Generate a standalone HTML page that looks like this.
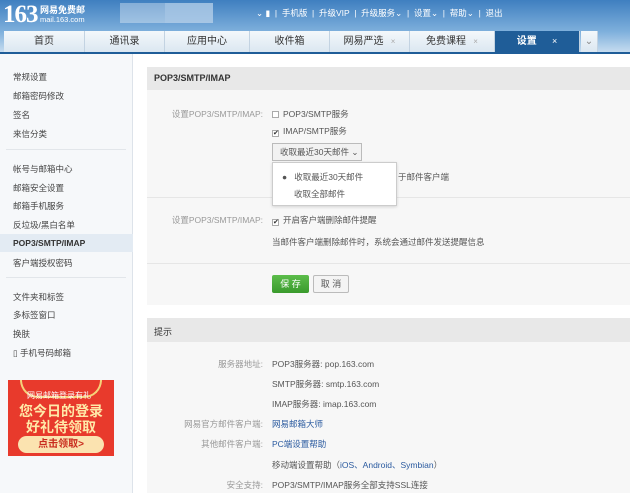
<!DOCTYPE html><html><head><meta charset="utf-8"><style>
*{margin:0;padding:0;box-sizing:border-box}
body{width:630px;height:493px;overflow:hidden;font-family:"Liberation Sans","Noto Sans CJK SC",sans-serif;font-size:9px;color:#444;background:#fff;position:relative}
.a{position:absolute;white-space:nowrap}
#hd{position:absolute;left:0;top:0;width:630px;height:53px;background:linear-gradient(#3f7fc0,#7fb0dc 60%,#c9def0)}
.tab{position:absolute;top:31px;height:21px;background:linear-gradient(#f4f8fb,#dbe7f1);border-right:1px solid #c3d3e2;font-size:10px;color:#333;line-height:21px;text-align:center}
.nav{color:#fff;font-size:8.5px;top:7px}
.sb{left:13px;font-size:8.5px;color:#444}
.lab{right:367px;color:#999;font-size:8.5px;text-align:right}
.v{left:272px;font-size:8.5px;color:#555}
.cb{display:inline-block;width:7px;height:7px;border:1px solid #aaa;background:#fff;vertical-align:-1px;margin-right:4px;font-size:7px;line-height:5px;color:#333;text-align:center}
</style></head><body>
<div id="hd"></div>
<div class="a" style="left:3px;top:1px;font-size:25px;font-weight:bold;color:#fff;font-family:'Liberation Serif',serif;letter-spacing:-1px">163</div>
<div class="a" style="left:40px;top:3px;font-size:9px;color:#fff;font-weight:bold">网易免费邮</div>
<div class="a" style="left:40px;top:15px;font-size:7.5px;color:#fff">mail.163.com</div>
<div class="a" style="left:120px;top:3px;width:93px;height:20px;background:rgba(255,255,255,.35)"></div>
<div class="a" style="left:165px;top:3px;width:48px;height:20px;background:rgba(170,200,230,.6)"></div>
<div class="a nav" style="left:256px">⌄ ▮ &nbsp;|&nbsp; 手机版 &nbsp;|&nbsp; 升级VIP &nbsp;|&nbsp; 升级服务⌄ &nbsp;|&nbsp; 设置⌄ &nbsp;|&nbsp; 帮助⌄ &nbsp;|&nbsp; 退出</div>
<div class="tab" style="left:4px;width:81px">首页</div>
<div class="tab" style="left:85px;width:80px">通讯录</div>
<div class="tab" style="left:165px;width:85px">应用中心</div>
<div class="tab" style="left:250px;width:80px">收件箱</div>
<div class="tab" style="left:330px;width:80px">网易严选 <span style="color:#aaa;font-size:8px">&nbsp;&nbsp;×</span></div>
<div class="tab" style="left:410px;width:85px">免费课程 <span style="color:#aaa;font-size:8px">&nbsp;&nbsp;×</span></div>
<div class="tab" style="left:495px;width:85px;background:#1f5d98;color:#fff;font-weight:bold">设置 <span style="font-weight:normal;font-size:9px">&nbsp;&nbsp;&nbsp;&nbsp;&nbsp;×</span></div>
<div class="tab" style="left:581px;width:17px;color:#888">⌄</div>
<div class="a" style="left:0;top:52px;width:630px;height:2px;background:#1f5d98"></div>
<div class="a" style="left:0;top:54px;width:133px;height:439px;background:#f6f8fa;border-right:1px solid #dde3ea"></div>
<div class="a sb" style="top:71px">常规设置</div>
<div class="a sb" style="top:90px">邮箱密码修改</div>
<div class="a sb" style="top:109px">签名</div>
<div class="a sb" style="top:128px">来信分类</div>
<div class="a" style="left:6px;top:149px;width:120px;height:1px;background:#e2e6ea"></div>
<div class="a sb" style="top:163px">帐号与邮箱中心</div>
<div class="a sb" style="top:182px">邮箱安全设置</div>
<div class="a sb" style="top:200px">邮箱手机服务</div>
<div class="a sb" style="top:219px">反垃圾/黑白名单</div>
<div class="a" style="left:0;top:234px;width:133px;height:18px;background:#e3ebf3"></div>
<div class="a sb" style="top:238px;font-weight:bold;color:#333">POP3/SMTP/IMAP</div>
<div class="a sb" style="top:257px">客户端授权密码</div>
<div class="a" style="left:6px;top:277px;width:120px;height:1px;background:#e2e6ea"></div>
<div class="a sb" style="top:291px">文件夹和标签</div>
<div class="a sb" style="top:309px">多标签窗口</div>
<div class="a sb" style="top:328px">换肤</div>
<div class="a sb" style="top:347px">▯ 手机号码邮箱</div>
<div class="a" style="left:8px;top:380px;width:106px;height:76px;background:#e83a2c"></div>
<div class="a" style="left:20px;top:380px;width:82px;height:18px;border:2px solid #f5d27a;border-top:none;border-radius:0 0 20px 20px"></div>
<div class="a" style="left:27px;top:390px;font-size:8px;color:#fff">网易邮箱登录有礼</div>
<div class="a" style="left:19px;top:401px;font-size:14px;color:#ffe9a8;font-weight:bold">您今日的登录</div>
<div class="a" style="left:26px;top:417px;font-size:14px;color:#ffe9a8;font-weight:bold">好礼待领取</div>
<div class="a" style="left:18px;top:436px;width:86px;height:17px;border-radius:9px;background:#fbe3b0;color:#c92b1e;font-size:10px;font-weight:bold;text-align:center;line-height:17px">点击领取&gt;</div>
<div class="a" style="left:147px;top:67px;width:483px;height:238px;background:#f7f7f7"></div>
<div class="a" style="left:147px;top:67px;width:483px;height:23px;background:#e8e8e8"></div>
<div class="a" style="left:154px;top:73px;font-weight:bold;font-size:9px;color:#333">POP3/SMTP/IMAP</div>
<div class="a lab" style="top:108px">设置POP3/SMTP/IMAP:</div>
<div class="a v" style="top:108px"><span class="cb"></span>POP3/SMTP服务</div>
<div class="a v" style="top:125px"><span class="cb">✔</span>IMAP/SMTP服务</div>
<div class="a" style="left:147px;top:197px;width:483px;height:1px;background:#e6e6e6"></div>
<div class="a v" style="left:398px;top:171px">于邮件客户端</div>
<div class="a" style="left:272px;top:143px;width:90px;height:18px;border:1px solid #bbb;background:#f2f2f2;font-size:8.5px;line-height:16px;padding-left:7px;color:#555">收取最近30天邮件 ⌄</div>
<div class="a" style="left:272px;top:162px;width:125px;height:44px;background:#fff;border:1px solid #ccc;box-shadow:0 1px 3px rgba(0,0,0,.15)"></div>
<div class="a v" style="left:282px;top:171px">●&nbsp;&nbsp;&nbsp;收取最近30天邮件</div>
<div class="a v" style="left:294px;top:188px">收取全部邮件</div>
<div class="a lab" style="top:214px">设置POP3/SMTP/IMAP:</div>
<div class="a v" style="top:214px"><span class="cb">✔</span>开启客户端删除邮件提醒</div>
<div class="a v" style="top:236px">当邮件客户端删除邮件时，系统会通过邮件发送提醒信息</div>
<div class="a" style="left:147px;top:263px;width:483px;height:1px;background:#e6e6e6"></div>
<div class="a" style="left:272px;top:275px;width:37px;height:18px;background:linear-gradient(#5cbd4b,#3a9a2c);border-radius:2px;color:#fff;font-size:9px;text-align:center;line-height:18px">保 存</div>
<div class="a" style="left:313px;top:275px;width:36px;height:18px;background:#f4f4f4;border:1px solid #bbb;border-radius:2px;color:#555;font-size:9px;text-align:center;line-height:16px">取 消</div>
<div class="a" style="left:147px;top:318px;width:483px;height:175px;background:#f7f7f7"></div>
<div class="a" style="left:147px;top:318px;width:483px;height:24px;background:#e8e8e8"></div>
<div class="a" style="left:154px;top:325px;font-size:9px;color:#333">提示</div>
<div class="a lab" style="top:358px">服务器地址:</div>
<div class="a v" style="top:358px">POP3服务器: pop.163.com</div>
<div class="a v" style="top:378px">SMTP服务器: smtp.163.com</div>
<div class="a v" style="top:398px">IMAP服务器: imap.163.com</div>
<div class="a lab" style="top:418px">网易官方邮件客户端:</div>
<div class="a v" style="top:418px;color:#2a5a9f">网易邮箱大师</div>
<div class="a lab" style="top:438px">其他邮件客户端:</div>
<div class="a v" style="top:438px;color:#2a5a9f">PC端设置帮助</div>
<div class="a v" style="top:459px">移动端设置帮助（<span style="color:#2a5a9f">iOS、Android、Symbian</span>）</div>
<div class="a lab" style="top:479px">安全支持:</div>
<div class="a v" style="top:479px">POP3/SMTP/IMAP服务全部支持SSL连接</div>
</body></html>
